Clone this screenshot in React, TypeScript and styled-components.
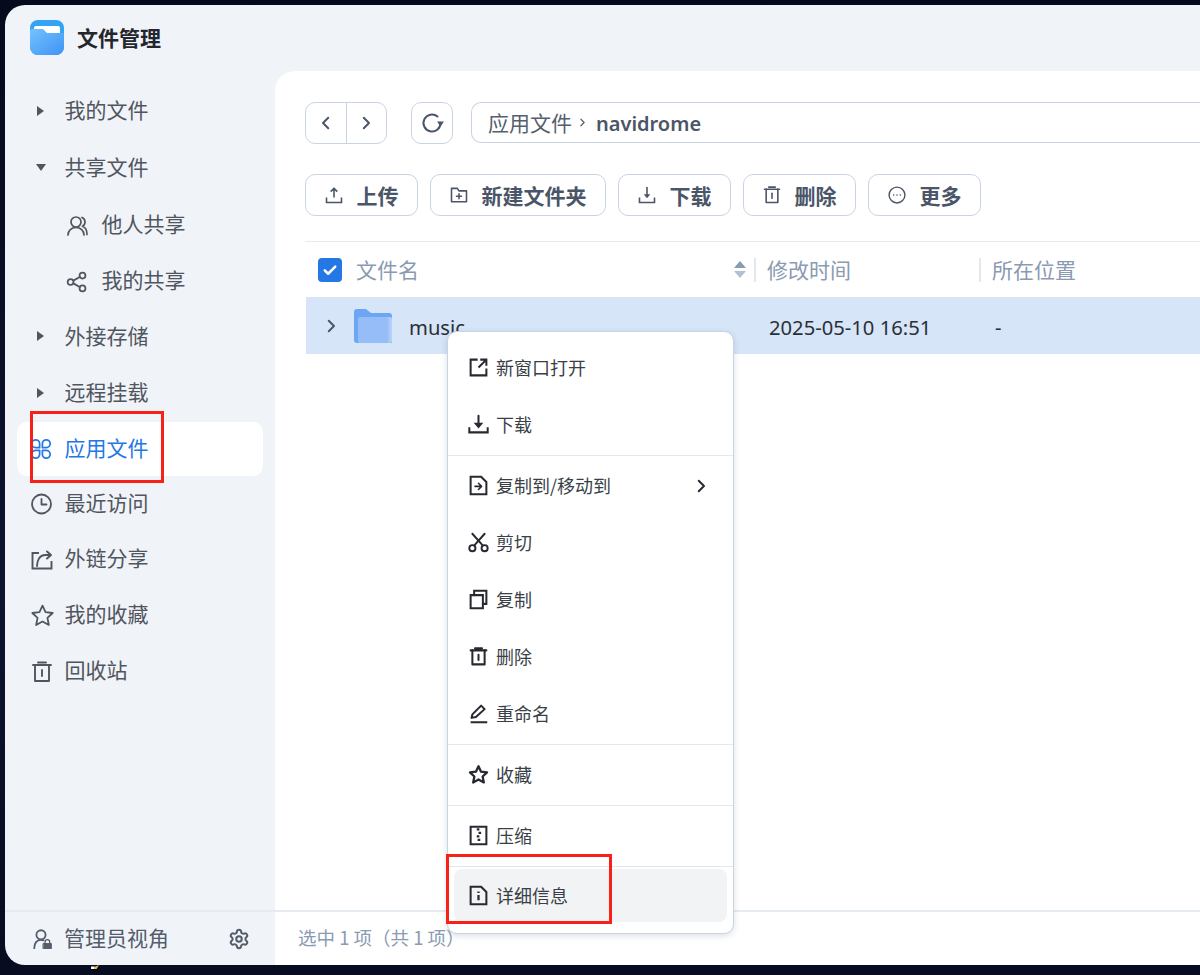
import React from "react";
import styled, { createGlobalStyle } from "styled-components";
import { Settings } from "lucide-react";

const FONT = `"Noto Sans CJK SC", "Noto Sans", sans-serif`;
const MENU_INK = "#26292f";

const GlobalStyle = createGlobalStyle`
  html, body {
    margin: 0;
    padding: 0;
    height: 975px;
    overflow: hidden;
    background: #070c20;
    font-family: ${FONT};
  }
  * { box-sizing: border-box; }
`;

const Desktop = styled.div`
  position: relative;
  width: 1200px;
  height: 975px;
  padding: 5px 0 10px 5px;
  background: linear-gradient(180deg, #050a1c 0%, #0c1430 60%, #070c20 100%);
  overflow: hidden;
`;

const WallpaperSpeck = styled.div`
  position: absolute;
  left: 91px;
  top: 965px;
  width: 8px;
  height: 4px;
  background: linear-gradient(90deg, #ffffff 0 40%, #e8c35a 40% 100%);
  clip-path: polygon(0 40%, 60% 40%, 100% 0, 70% 100%, 0 100%);
`;

const Window = styled.div`
  position: relative;
  width: 1195px;
  height: 960px;
  display: grid;
  grid-template-columns: 270px 1fr;
  grid-template-rows: 1fr 55px;
  background: #f0f3f8;
  border-radius: 20px 0 0 20px;
  overflow: hidden;
`;

const Sidebar = styled.aside`
  display: flex;
  flex-direction: column;
`;

const Brand = styled.div`
  height: 66px;
  padding: 0 0 1px 25px;
  display: flex;
  align-items: center;
  gap: 13px;
  font: 700 21px/1 ${FONT};
  color: #23262c;
`;

const Nav = styled.nav`
  padding: 12px 12px 0;
  display: flex;
  flex-direction: column;
`;

const NavItem = styled.div<{ $active?: boolean; $h?: number; $sub?: boolean }>`
  height: ${(p) => p.$h ?? 56}px;
  padding-left: ${(p) => (p.$sub ? 49 : 13)}px;
  display: flex;
  align-items: center;
  border-radius: 10px;
  background: ${(p) => (p.$active ? "#fff" : "transparent")};
  color: ${(p) => (p.$active ? "#2477e4" : "#50565f")};
  font: 400 21px/1 ${FONT};
`;

const NavLabel = styled.span`
  margin-left: -0.5px;
  padding-bottom: 4px;
`;

const NavIcon = styled.span<{ $w?: number }>`
  width: ${(p) => p.$w ?? 35}px;
  flex: none;
  display: flex;
  align-items: center;
`;

const Caret = styled.span<{ $open?: boolean }>`
  width: 35px;
  flex: none;
  padding: 0 0 2px 7px;
  display: flex;
  align-items: center;

  &::before {
    content: "";
    display: block;
    ${(p) =>
      p.$open
        ? `margin-left: -1px; border-top: 7px solid #50565f; border-left: 5.5px solid transparent; border-right: 5.5px solid transparent;`
        : `border-left: 7px solid #50565f; border-top: 5.5px solid transparent; border-bottom: 5.5px solid transparent;`}
  }
`;

const Main = styled.main`
  position: relative;
  background: #fff;
  border-top-left-radius: 20px;
  margin-top: 66px;
  padding: 31px 0 0 30px;
  overflow: hidden;
`;

const PathBar = styled.div`
  display: flex;
  align-items: flex-start;
`;

const NavGroup = styled.div`
  width: 82px;
  height: 42px;
  display: flex;
  border: 1px solid #c9d4e2;
  border-radius: 10px;
  margin-right: 24px;
`;

const NavBtn = styled.div<{ $divided?: boolean }>`
  flex: 1;
  display: flex;
  align-items: center;
  justify-content: center;
  border-left: ${(p) => (p.$divided ? "1px solid #c9d4e2" : "none")};
`;

const RefreshBtn = styled.div`
  width: 42px;
  height: 42px;
  display: flex;
  align-items: center;
  justify-content: center;
  border: 1px solid #c9d4e2;
  border-radius: 10px;
  margin-right: 18px;
`;

const Breadcrumb = styled.div`
  flex: 1;
  height: 41px;
  display: flex;
  align-items: center;
  padding-left: 16px;
  border: 1px solid #c9d4e2;
  border-right: none;
  border-radius: 10px 0 0 10px;
  color: #565f6d;
  font: 400 21px/1 ${FONT};

  svg {
    margin: 0 7px 0 4px;
  }

  b {
    padding-top: 2px;
    font: 600 20px/1 "Noto Sans", sans-serif;
    color: #4c5566;
  }
`;

const Toolbar = styled.div`
  display: flex;
  gap: 12px;
  margin-top: 30px;
`;

const ToolButton = styled.div<{ $w: number }>`
  width: ${(p) => p.$w}px;
  height: 42px;
  display: flex;
  align-items: center;
  justify-content: center;
  gap: 13px;
  padding-right: 1px;
  border: 1px solid #c9d4e2;
  border-radius: 10px;
  color: #4a5568;
  font: 700 21px/1 ${FONT};
`;

const TableHead = styled.div`
  margin-top: 25px;
  height: 56px;
  display: flex;
  align-items: center;
  border-top: 1px solid #e6ebf1;
  color: #8a9ab2;
  font: 400 21px/1 ${FONT};
`;

const CheckBox = styled.span`
  width: 24px;
  height: 24px;
  margin-left: 13px;
  margin-right: 14px;
  border-radius: 4px;
  background: #2477e4;
  display: flex;
  align-items: center;
  justify-content: center;
  flex: none;
`;

const HeadCell = styled.div<{ $w?: number; $divided?: boolean }>`
  width: ${(p) => (p.$w ? `${p.$w}px` : "auto")};
  flex: none;
  height: 24px;
  display: flex;
  align-items: center;
  justify-content: space-between;
  padding-left: ${(p) => (p.$divided ? 11 : 0)}px;
  border-left: ${(p) => (p.$divided ? "2px solid #e3e8ef" : "none")};
`;

const SortArrows = styled.span`
  display: flex;
  flex-direction: column;
  gap: 3px;
  margin-right: 8px;

  &::before, &::after {
    content: "";
    display: block;
    border-left: 6.5px solid transparent;
    border-right: 6.5px solid transparent;
  }
  &::before { border-bottom: 7px solid #8a9ab2; }
  &::after { border-top: 7px solid #b3c0d2; }
`;

const FileRow = styled.div`
  height: 57px;
  margin-left: 1px;
  display: flex;
  align-items: center;
  background: #d6e5f8;
  color: #2b2f36;
  font: 400 20.2px/1 "Noto Sans", sans-serif;
`;

const RowChevron = styled.span`
  width: 48px;
  padding-left: 16px;
  flex: none;
  display: flex;
`;

const NameCell = styled.div`
  width: 415px;
  flex: none;
  display: flex;
  align-items: center;
  gap: 17px;
`;

const CellText = styled.span`
  padding-top: 3px;
`;

const DateCell = styled(CellText)`
  width: 226px;
  flex: none;
`;

const Footer = styled.div`
  grid-column: 1 / 3;
  display: grid;
  grid-template-columns: 270px 1fr;
  align-items: center;
  border-top: 2px solid #e6ebf1;
`;

const FooterSide = styled.div`
  height: 100%;
  display: flex;
  align-items: center;
  padding: 0 25px 0 28px;
  gap: 11px;
  color: #535d6c;
  font: 400 21px/1 ${FONT};
`;

const FooterLabel = styled.span`
  flex: 1;
  padding-bottom: 2px;
`;

const FooterMain = styled.div`
  height: 100%;
  background: #fff;
  display: flex;
  align-items: center;
  padding: 0 0 3px 23px;
  color: #8a9ab2;
  font: 400 18.5px/1 ${FONT};
`;

const Menu = styled.div`
  position: absolute;
  left: 447px;
  top: 331px;
  width: 287px;
  height: 603px;
  padding-top: 8px;
  background: #fff;
  border: 1px solid #c9d4e2;
  border-radius: 10px;
  box-shadow: 0 2px 6px rgba(60, 80, 110, 0.18);
`;

const MenuItem = styled.div<{ $hover?: boolean }>`
  height: ${(p) => (p.$hover ? 53 : 57)}px;
  margin: ${(p) => (p.$hover ? "1px 6px 0" : "0 6px")};
  padding: 0 17px ${(p) => (p.$hover ? 0 : 2)}px 14px;
  display: flex;
  align-items: center;
  gap: 7px;
  border-radius: 8px;
  background: ${(p) => (p.$hover ? "#f2f3f5" : "transparent")};
  color: #3a3f47;
  font: 400 18px/1 ${FONT};
`;

const MenuLabel = styled.span`
  flex: 1;
  padding-bottom: 2px;
`;

const MenuDivider = styled.div`
  height: 1px;
  margin: 1px 0 2px;
  background: #e4e8ee;
`;

const RedBox = styled.div<{ $x: number; $y: number; $w: number; $h: number }>`
  position: absolute;
  left: ${(p) => p.$x}px;
  top: ${(p) => p.$y}px;
  width: ${(p) => p.$w}px;
  height: ${(p) => p.$h}px;
  border: 3px solid #f8211a;
  pointer-events: none;
`;

const Ico: React.FC<{ s?: number; c?: string; w?: number; children: React.ReactNode }> = ({
  s = 22,
  c = "currentColor",
  w = 2,
  children,
}) => (
  <svg width={s} height={s} viewBox="0 0 24 24" fill="none" stroke={c} strokeWidth={w} strokeLinecap="round" strokeLinejoin="round">
    {children}
  </svg>
);

const BrandIcon = () => (
  <svg width="34" height="35" viewBox="0 0 34 35">
    <defs>
      <linearGradient id="brandBody" x1="0" y1="0" x2="1" y2="1">
        <stop offset="0" stopColor="#74c2fd" />
        <stop offset="1" stopColor="#3e93f5" />
      </linearGradient>
    </defs>
    <rect width="34" height="35" rx="8" fill="#33a3f4" />
    <rect x="4" y="6" width="26" height="10" rx="2" fill="#fff" />
    <path d="M0 11a2 2 0 0 1 2-2h11l4 4h17v14a8 8 0 0 1-8 8H8a8 8 0 0 1-8-8Z" fill="url(#brandBody)" />
  </svg>
);

const FolderIcon = () => (
  <svg width="38" height="34" viewBox="0 0 38 34">
    <defs>
      <linearGradient id="folderFront" x1="0" y1="0" x2="1" y2="0">
        <stop offset="0" stopColor="#97bdf9" />
        <stop offset="0.85" stopColor="#97bdf9" />
        <stop offset="1" stopColor="#bcd4f9" />
      </linearGradient>
    </defs>
    <path d="M0 3a3 3 0 0 1 3-3h9l5 4h18a3 3 0 0 1 3 3v27H3a3 3 0 0 1-3-3Z" fill="#6ea6f6" />
    <rect x="4" y="8" width="34" height="26" rx="2" fill="url(#folderFront)" />
  </svg>
);

const Chev: React.FC<{ dir: "l" | "r"; s?: number; c?: string }> = ({ dir, s = 18, c = "#4a5568" }) => (
  <Ico s={s} c={c} w={2.6}>
    <path d={dir === "l" ? "M15 5l-7 7 7 7" : "M9 5l7 7-7 7"} />
  </Ico>
);

const TrashPath = () => (
  <>
    <path d="M3 5h18M8 2.5h8" />
    <path d="M5 5v16h14V5" />
    <path d="M12 10v6" />
  </>
);

const StarPath = () => (
  <path d="M12 2.5l2.9 6.3 6.9.8-5.1 4.7 1.4 6.8-6.100-3.400-6.100 3.400 1.400-6.800L2.200 9.600l6.900-.8Z" />
);

const sideIcons = {
  users: (
    <Ico s={24} w={1.7}>
      <circle cx="10" cy="8" r="5" />
      <path d="M2 21c0-4.5 3.5-7.5 8-7.500s8 3 8 7.500M16 3.500c2 .8 3 2.500 3 4.500s-1 3.500-2.500 4.300c2.700 1 4.500 4 4.500 8.200" />
    </Ico>
  ),
  share: (
    <Ico s={22} w={1.9}>
      <circle cx="5" cy="12" r="3.2" />
      <circle cx="18" cy="5" r="3.2" />
      <circle cx="18" cy="19" r="3.2" />
      <path d="M8 10.5l7-4M8 13.5l7 4" />
    </Ico>
  ),
  apps: (
    <Ico s={22} w={1.9}>
      <path d="M10.5 10.5H6.25a4.25 4.25 0 1 1 4.25-4.25Z" />
      <path d="M13.5 10.5V6.25a4.25 4.25 0 1 1 4.25 4.25Z" />
      <path d="M10.5 13.5v4.25a4.25 4.25 0 1 1-4.25-4.25Z" />
      <path d="M13.5 13.5h4.25a4.25 4.25 0 1 1-4.25 4.25Z" />
    </Ico>
  ),
  clock: (
    <Ico s={24} w={1.8}>
      <circle cx="11.5" cy="12" r="9.5" />
      <path d="M11.5 7v5.5h5" />
    </Ico>
  ),
  link: (
    <Ico s={24} w={1.9}>
      <path d="M9 5H2.5v15.5h19V13" strokeLinecap="butt" strokeLinejoin="miter" />
      <path d="M7 18c0-6 3-11 8-11h6M17 3.5L21 7l-4 3.5" />
    </Ico>
  ),
  star: (
    <Ico s={25} w={1.7}>
      <StarPath />
    </Ico>
  ),
  trash: (
    <Ico s={24} w={1.9}>
      <TrashPath />
    </Ico>
  ),
};

const menuIcons = {
  open: (
    <Ico s={21} c={MENU_INK} w={2.3}>
      <path d="M11 3H3v18h18v-8M14 3h7v7M21 3l-9 9" strokeLinecap="butt" strokeLinejoin="miter" />
    </Ico>
  ),
  download: (
    <Ico s={21} c={MENU_INK} w={2.3}>
      <path d="M1.5 15v6h21v-6" strokeLinecap="butt" strokeLinejoin="miter" />
      <path d="M12 2v9" />
      <path d="M6.5 10h11L12 16.5Z" fill={MENU_INK} stroke="none" />
    </Ico>
  ),
  copyTo: (
    <Ico s={21} c={MENU_INK} w={2.3}>
      <path d="M3 2h12l6 6v14H3Z" strokeLinejoin="miter" />
      <path d="M8 13h7M12 9.5l3.5 3.5-3.5 3.5" strokeWidth="1.8" />
    </Ico>
  ),
  cut: (
    <Ico s={21} c={MENU_INK} w={2.2}>
      <circle cx="5" cy="18.5" r="3.5" />
      <circle cx="19" cy="18.5" r="3.5" />
      <path d="M7 15.5L19 2M17 15.5L5 2" />
    </Ico>
  ),
  copy: (
    <Ico s={21} c={MENU_INK} w={2.3}>
      <path d="M3 7h14v15H3Z" strokeLinejoin="miter" />
      <path d="M7 7V2h14v15h-4" strokeLinejoin="miter" />
    </Ico>
  ),
  trash: (
    <Ico s={21} c={MENU_INK} w={2.3}>
      <TrashPath />
    </Ico>
  ),
  rename: (
    <Ico s={21} c={MENU_INK} w={2.3}>
      <path d="M3 22h19" strokeLinecap="butt" />
      <path d="M4 17l1-4L15 3l4 4L9 16Z" />
    </Ico>
  ),
  star: (
    <Ico s={21} c={MENU_INK} w={2.6}>
      <StarPath />
    </Ico>
  ),
  zip: (
    <Ico s={21} c={MENU_INK} w={2.3}>
      <path d="M3 2h18v20H3Z" strokeLinejoin="miter" />
      <path d="M10 5h3M12 9h3M10 13h3M11 17h3" strokeWidth="2.8" strokeLinecap="butt" />
    </Ico>
  ),
  info: (
    <Ico s={21} c={MENU_INK} w={2.3}>
      <path d="M3 2h12l6 6v14H3Z" strokeLinejoin="miter" />
      <path d="M12 7.5V9M12 11.5v6" strokeWidth="2.6" strokeLinecap="butt" />
    </Ico>
  ),
};

const navRows = [
  { label: "我的文件", caret: "closed", h: 57 },
  { label: "共享文件", caret: "open", h: 57 },
  { label: "他人共享", icon: sideIcons.users, sub: true, h: 57 },
  { label: "我的共享", icon: sideIcons.share, sub: true, h: 55 },
  { label: "外接存储", caret: "closed", h: 56 },
  { label: "远程挂载", caret: "closed", h: 57 },
  { label: "应用文件", icon: sideIcons.apps, active: true, h: 54 },
  { label: "最近访问", icon: sideIcons.clock, h: 56 },
  { label: "外链分享", icon: sideIcons.link, h: 55 },
  { label: "我的收藏", icon: sideIcons.star, h: 57 },
  { label: "回收站", icon: sideIcons.trash, h: 55 },
];

const menuGroups = [
  [
    { label: "新窗口打开", icon: menuIcons.open },
    { label: "下载", icon: menuIcons.download },
  ],
  [
    { label: "复制到/移动到", icon: menuIcons.copyTo, more: true },
    { label: "剪切", icon: menuIcons.cut },
    { label: "复制", icon: menuIcons.copy },
    { label: "删除", icon: menuIcons.trash },
    { label: "重命名", icon: menuIcons.rename },
  ],
  [{ label: "收藏", icon: menuIcons.star }],
  [{ label: "压缩", icon: menuIcons.zip }],
];

const toolButtons = [
  {
    label: "上传",
    w: 113,
    icon: (
      <Ico s={20} w={1.9}>
        <path d="M3 15v6h18v-6M12 15V4M8 8l4-4 4 4" strokeLinejoin="miter" strokeLinecap="butt" />
      </Ico>
    ),
  },
  {
    label: "新建文件夹",
    w: 176,
    icon: (
      <Ico s={20} w={1.9}>
        <path d="M3 4h7l2 3h9v13H3ZM12 10.5v6M9 13.5h6" />
      </Ico>
    ),
  },
  {
    label: "下载",
    w: 113,
    icon: (
      <Ico s={20} w={1.9}>
        <path d="M3 15v6h18v-6" strokeLinejoin="miter" strokeLinecap="butt" />
        <path d="M12 3v9" />
        <path d="M8 11h8l-4 5Z" fill="currentColor" stroke="none" />
      </Ico>
    ),
  },
  {
    label: "删除",
    w: 113,
    icon: (
      <Ico s={20} w={1.9}>
        <TrashPath />
      </Ico>
    ),
  },
  {
    label: "更多",
    w: 113,
    icon: (
      <Ico s={20} w={1.7}>
        <circle cx="12" cy="12" r="9.5" />
        <path d="M8 12h.01M12 12h.01M16 12h.01" strokeWidth="2" />
      </Ico>
    ),
  },
];

const App = () => (
  <Desktop>
    <GlobalStyle />
    <WallpaperSpeck />
    <Window>
      <Sidebar>
        <Brand>
          <BrandIcon />
          文件管理
        </Brand>
        <Nav>
          {navRows.map((row) => (
            <NavItem key={row.label} $active={row.active} $sub={row.sub} $h={row.h}>
              {row.caret ? <Caret $open={row.caret === "open"} /> : <NavIcon $w={row.sub ? 36 : 35}>{row.icon}</NavIcon>}
              <NavLabel>{row.label}</NavLabel>
            </NavItem>
          ))}
        </Nav>
      </Sidebar>
      <Main>
        <PathBar>
          <NavGroup>
            <NavBtn>
              <Chev dir="l" />
            </NavBtn>
            <NavBtn $divided>
              <Chev dir="r" />
            </NavBtn>
          </NavGroup>
          <RefreshBtn>
            <Ico s={24} c="#4a5568" w={2}>
              <path d="M20.5 12a8.5 8.5 0 1 1-3-6.5" />
              <path d="M17 10.5h7l-3.5 5Z" fill="#4a5568" stroke="none" />
            </Ico>
          </RefreshBtn>
          <Breadcrumb>
            应用文件
            <Ico s={13} c="#565f6d" w={2.2}>
              <path d="M9 6l6 6-6 6" />
            </Ico>
            <b>navidrome</b>
          </Breadcrumb>
        </PathBar>
        <Toolbar>
          {toolButtons.map((b) => (
            <ToolButton key={b.label} $w={b.w}>
              {b.icon}
              {b.label}
            </ToolButton>
          ))}
        </Toolbar>
        <TableHead>
          <CheckBox>
            <Ico s={18} c="#fff" w={3.4}>
              <path d="M5 12.5l4.5 4.5L19 7.5" />
            </Ico>
          </CheckBox>
          <HeadCell $w={398}>
            文件名
            <SortArrows />
          </HeadCell>
          <HeadCell $w={225} $divided>
            修改时间
          </HeadCell>
          <HeadCell $divided>所在位置</HeadCell>
        </TableHead>
        <FileRow>
          <RowChevron>
            <Chev dir="r" s={18} c="#4a5568" />
          </RowChevron>
          <NameCell>
            <FolderIcon />
            <CellText>music</CellText>
          </NameCell>
          <DateCell>2025-05-10 16:51</DateCell>
          <CellText>-</CellText>
        </FileRow>
      </Main>
      <Footer>
        <FooterSide>
          <Ico s={20} c="#535d6c" w={2.2}>
            <circle cx="9.6" cy="7" r="5.5" />
            <path d="M1.5 23c0-6 3-10 8-10 1 0 2 .2 3 .5" />
            <path d="M12.5 17.5H22v6h-9.5Z" fill="#535d6c" strokeWidth="1.2" />
            <path d="M14.5 17v-1.5a2.7 2.7 0 0 1 5.5 0V17" strokeWidth="1.6" />
          </Ico>
          <FooterLabel>管理员视角</FooterLabel>
          <Settings size={22} strokeWidth={2.2} color="#535d6c" />
        </FooterSide>
        <FooterMain>选中 1 项（共 1 项）</FooterMain>
      </Footer>
    </Window>
    <Menu>
      {menuGroups.map((group, i) => (
        <React.Fragment key={i}>
          {group.map((item) => (
            <MenuItem key={item.label}>
              {item.icon}
              <MenuLabel>{item.label}</MenuLabel>
              {item.more && <Chev dir="r" s={18} c="#26292f" />}
            </MenuItem>
          ))}
          <MenuDivider />
        </React.Fragment>
      ))}
      <MenuItem $hover>
        {menuIcons.info}
        <MenuLabel>详细信息</MenuLabel>
      </MenuItem>
    </Menu>
    <RedBox $x={30} $y={411} $w={134} $h={72} />
    <RedBox $x={446} $y={854} $w={166} $h={70} />
  </Desktop>
);

export default App;
